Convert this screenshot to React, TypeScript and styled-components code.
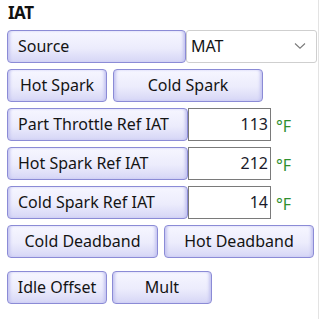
import styled, { createGlobalStyle } from 'styled-components'

const GlobalStyle = createGlobalStyle`
  html, body {
    margin: 0;
    padding: 0;
    background: #ffffff;
  }
  body {
    font-family: "Noto Sans", "Open Sans", sans-serif;
  }
`

const Panel = styled.div`
  box-sizing: border-box;
  width: 319px;
  height: 319px;
  border-right: 1px solid #e3e3e3;
  padding: 3px 0 0 7px;
  display: flex;
  flex-direction: column;
`

const Title = styled.div`
  font-size: 17px;
  font-weight: 700;
  letter-spacing: -0.5px;
  color: #111;
  height: 27px;
  padding-left: 1px;
  line-height: 20px;
`

const Rows = styled.div`
  display: flex;
  flex-direction: column;
  gap: 6px;
`

const Row = styled.div<{ gap?: number; spaceBefore?: number }>`
  display: flex;
  align-items: stretch;
  height: 33px;
  gap: ${p => p.gap ?? 0}px;
  margin-top: ${p => p.spaceBefore ?? 0}px;
`

const Button = styled.div<{ w: number; left?: boolean }>`
  box-sizing: border-box;
  width: ${p => p.w}px;
  height: 33px;
  display: flex;
  align-items: center;
  justify-content: ${p => (p.left ? 'flex-start' : 'center')};
  padding: ${p => (p.left ? '0 0 1px 10px' : '0 0 1px')};
  border: 1px solid #8b8bd6;
  border-radius: 4px;
  background: linear-gradient(#f6f6ff 0%, #ececfc 55%, #d6d6f6 100%);
  box-shadow: inset 3px 0 3px -1px #c4c4f0, inset -3px 0 3px -1px #c4c4f0;
  font-size: 16px;
  color: #141414;
  white-space: nowrap;
`

const Combo = styled.div`
  box-sizing: border-box;
  width: 131px;
  height: 33px;
  display: flex;
  align-items: center;
  justify-content: space-between;
  padding: 0 10px 1px 4px;
  border: 1px solid #cfcfcf;
  border-radius: 3px;
  background: #ffffff;
  font-size: 16px;
  color: #141414;
`

const NumberBox = styled.div`
  box-sizing: border-box;
  width: 83px;
  height: 33px;
  display: flex;
  align-items: center;
  justify-content: flex-end;
  padding: 0 2px 1px 0;
  border: 1px solid #7a7a7a;
  background: #ffffff;
  font-size: 16px;
  color: #1a1a2a;
`

const Unit = styled.div`
  display: flex;
  align-items: center;
  padding: 2px 0 0 5px;
  font-size: 16px;
  color: #2f8f2f;
`

function Chevron() {
  return (
    <svg width="12" height="8" viewBox="0 0 12 8">
      <path d="M1 1.5 L6 6.2 L11 1.5" fill="none" stroke="#7a7a7a" strokeWidth="1.1" />
    </svg>
  )
}

const refRows = [
  { label: 'Part Throttle Ref IAT', value: 113 },
  { label: 'Hot Spark Ref IAT', value: 212 },
  { label: 'Cold Spark Ref IAT', value: 14 },
]

export default function App() {
  return (
    <>
      <GlobalStyle />
      <Panel>
        <Title>IAT</Title>
        <Rows>
          <Row>
            <Button w={179} left>Source</Button>
            <Combo>
              <span>MAT</span>
              <Chevron />
            </Combo>
          </Row>
          <Row gap={6}>
            <Button w={100}>Hot Spark</Button>
            <Button w={150}>Cold Spark</Button>
          </Row>
          {refRows.map(r => (
            <Row key={r.label}>
              <Button w={181} left>{r.label}</Button>
              <NumberBox>{r.value}</NumberBox>
              <Unit>°F</Unit>
            </Row>
          ))}
          <Row gap={6}>
            <Button w={151}>Cold Deadband</Button>
            <Button w={150}>Hot Deadband</Button>
          </Row>
          <Row gap={5} spaceBefore={7}>
            <Button w={100}>Idle Offset</Button>
            <Button w={100}>Mult</Button>
          </Row>
        </Rows>
      </Panel>
    </>
  )
}
